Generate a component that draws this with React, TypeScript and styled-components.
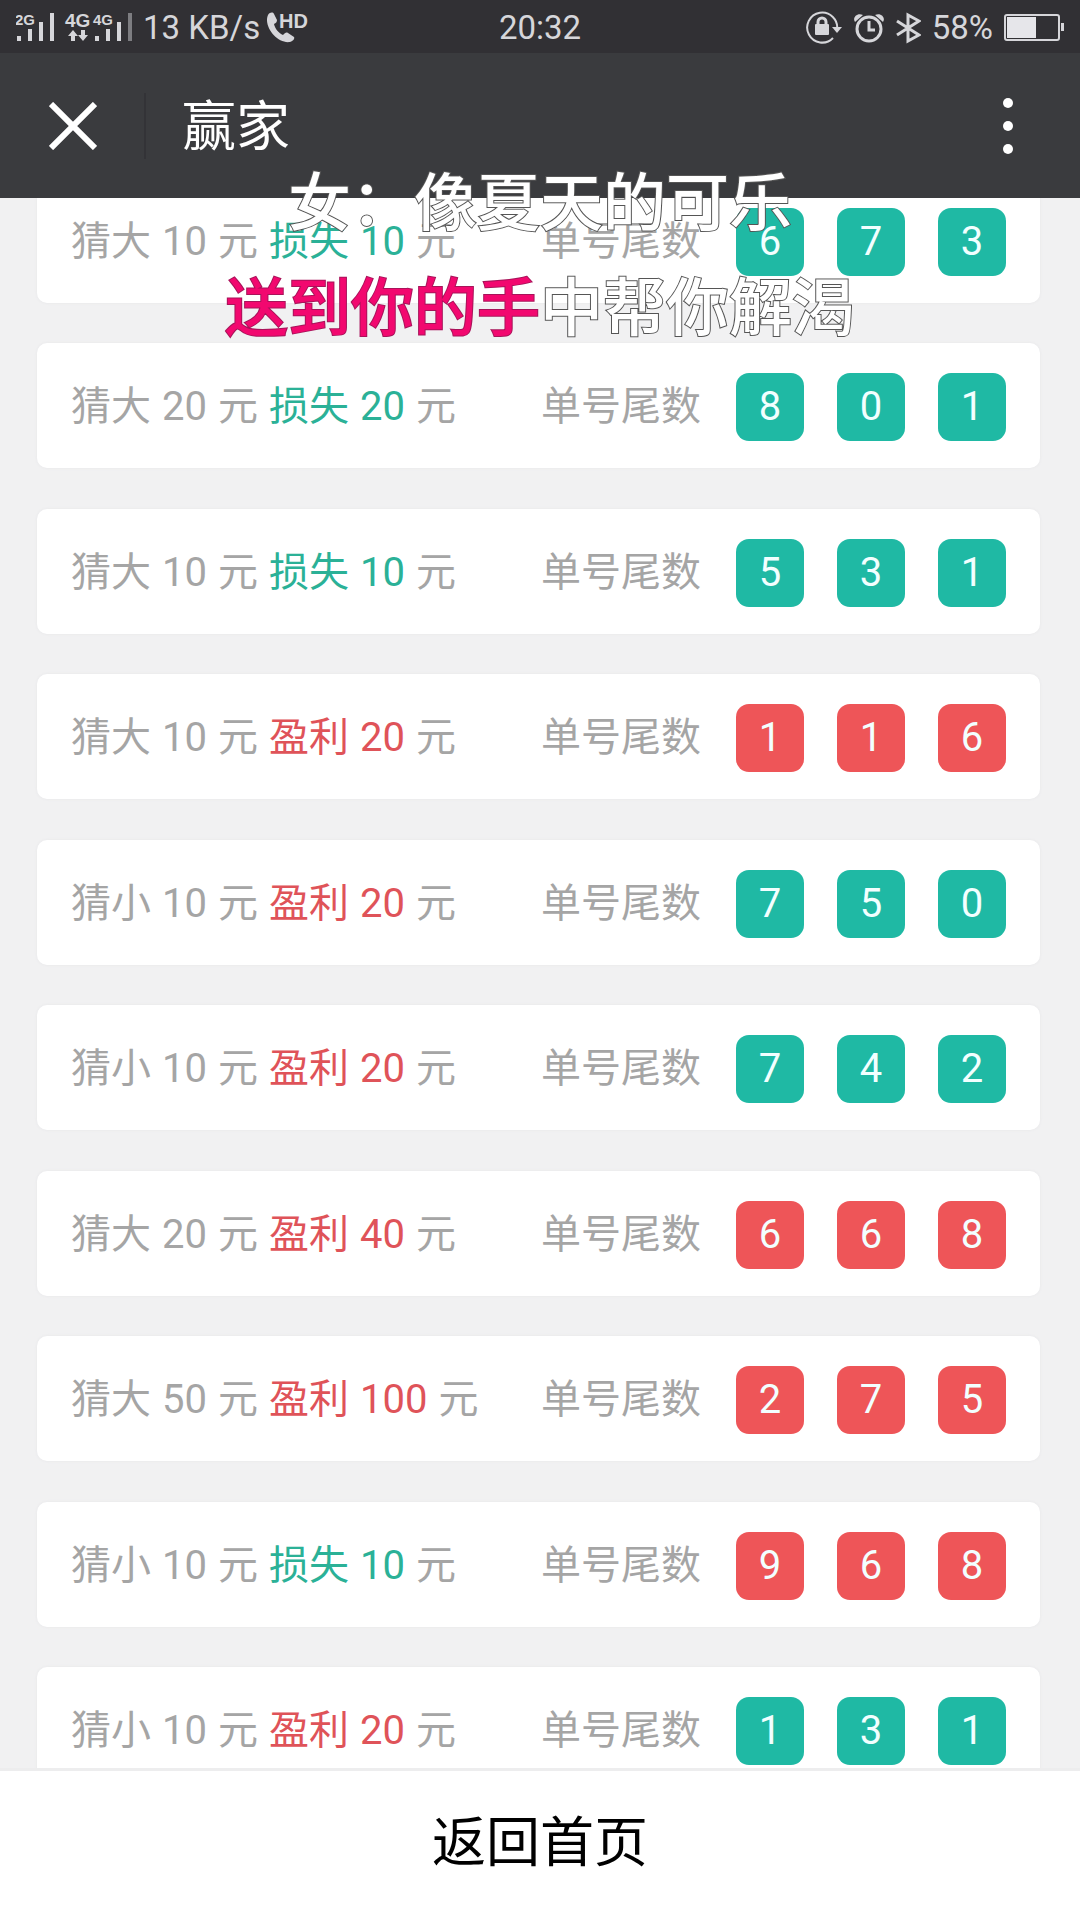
import React from "react";
import styled, { createGlobalStyle } from "styled-components";

const GlobalStyle = createGlobalStyle`
  * { box-sizing: border-box; }
  body {
    margin: 0;
    background: #f1f1f2;
    font-family: Roboto, "Noto Sans CJK SC", sans-serif;
  }
`;

const GREEN = "#1fb9a4";
const RED = "#ee5558";

const Screen = styled.div`
  position: relative;
  display: flex;
  flex-direction: column;
  min-height: 100vh;
  overflow: hidden;
`;

const StatusBar = styled.div`
  display: grid;
  grid-template-columns: 1fr auto 1fr;
  align-items: center;
  height: 53px;
  padding: 2px 16px 0;
  background: #313034;
  color: #d6d6da;
  font-size: 33px;
  line-height: 40px;
`;

const StatusGroup = styled.div<{ $end?: boolean }>`
  display: flex;
  align-items: center;
  justify-content: ${(p) => (p.$end ? "flex-end" : "flex-start")};
  gap: ${(p) => (p.$end ? "11px" : "7px")};
`;

const StatusIcon = styled.svg`
  display: block;
  flex: none;
  fill: currentColor;
  font-family: "Liberation Sans", Arial, sans-serif;
  font-weight: 700;
`;

const TitleBar = styled.header`
  display: flex;
  align-items: center;
  height: 145px;
  padding: 0 66px 0 49px;
  background: #3a3b3e;
  color: #fff;
`;

const IconButton = styled.button`
  display: block;
  padding: 0;
  border: 0;
  background: none;
  color: inherit;
  cursor: pointer;

  svg { display: block; }
`;

const Divider = styled.span`
  width: 2px;
  height: 66px;
  margin: 0 36px 0 47px;
  background: #333337;
`;

const Title = styled.h1`
  flex: 1;
  margin: 0;
  padding-top: 4px;
  font-size: 54px;
  font-weight: 400;
  line-height: 64px;
`;

const Viewport = styled.main`
  display: flex;
  flex: 1;
  flex-direction: column;
  overflow: hidden;
`;

const RecordList = styled.ul`
  display: flex;
  flex: 1;
  flex-direction: column;
  justify-content: space-between;
  margin: -20px 40px -24px 37px;
  padding: 0;
  list-style: none;
`;

const Card = styled.li`
  display: flex;
  align-items: center;
  justify-content: space-between;
  height: 125px;
  padding: 3px 34px 0;
  border-radius: 10px;
  background: #fff;
  box-shadow: 0 0 3px #e6e6e8;
  color: #a5a5a5;
  font-size: 40px;
  line-height: 48px;
  white-space: nowrap;
`;

const Bet = styled.div`
  display: flex;
  gap: 11px;
`;

const Outcome = styled.span<{ $win: boolean }>`
  display: flex;
  gap: 11px;
  color: ${(p) => (p.$win ? "#df5359" : "#2bb197")};
`;

const Tail = styled.div`
  display: flex;
  align-items: center;
  gap: 35px;
`;

const Digits = styled.div`
  display: flex;
  gap: 33px;
`;

const Digit = styled.span<{ $big: boolean }>`
  display: grid;
  place-items: center;
  width: 68px;
  height: 68px;
  border-radius: 13px;
  background: ${(p) => (p.$big ? RED : GREEN)};
  color: #f2ffff;
`;

const HomeButton = styled.button`
  height: 152px;
  padding: 0 0 4px;
  border: 0;
  border-top: 3px solid #ededee;
  background: #fff;
  color: #000;
  font-family: inherit;
  font-size: 54px;
  line-height: 64px;
  cursor: pointer;
`;

const Lyrics = styled.div`
  position: absolute;
  top: 145px;
  left: 0;
  right: 0;
  color: #fff;
  font-family: "Noto Sans CJK SC", sans-serif;
  font-size: 63px;
  font-weight: 500;
  line-height: 105px;
  text-align: center;
  white-space: nowrap;
  pointer-events: none;
  -webkit-text-stroke: 2px #555;
  paint-order: stroke fill;
`;

const LyricLine = styled.p`
  margin: 0;
`;

const Sung = styled.span`
  color: #f2086f;
  -webkit-text-stroke-color: #a8145a;
`;

type Record = { side: string; stake: number; win: boolean; amount: number; tail: string; big: boolean };

const records: Record[] = [
  { side: "大", stake: 10, win: false, amount: 10, tail: "673", big: false },
  { side: "大", stake: 20, win: false, amount: 20, tail: "801", big: false },
  { side: "大", stake: 10, win: false, amount: 10, tail: "531", big: false },
  { side: "大", stake: 10, win: true, amount: 20, tail: "116", big: true },
  { side: "小", stake: 10, win: true, amount: 20, tail: "750", big: false },
  { side: "小", stake: 10, win: true, amount: 20, tail: "742", big: false },
  { side: "大", stake: 20, win: true, amount: 40, tail: "668", big: true },
  { side: "大", stake: 50, win: true, amount: 100, tail: "275", big: true },
  { side: "小", stake: 10, win: false, amount: 10, tail: "968", big: true },
  { side: "小", stake: 10, win: true, amount: 20, tail: "131", big: false },
];

const Signals = () => (
  <StatusIcon width="120" height="32" viewBox="0 0 120 32" aria-hidden="true">
    <text x="-1" y="13" fontSize="15">2G</text>
    <rect x="1" y="24" width="4" height="5" />
    <rect x="12" y="17" width="4" height="12" />
    <rect x="23" y="10" width="4" height="19" />
    <rect x="34" y="1" width="4" height="28" />
    <text x="49" y="15" fontSize="19">4G</text>
    <path d="M57 18l5 6h-3v5h-4v-5h-3zM67 29l-5-6h3v-5h4v5h3z" />
    <text x="77" y="13" fontSize="15">4G</text>
    <rect x="79" y="24" width="4" height="5" />
    <rect x="90" y="17" width="4" height="12" />
    <rect x="101" y="10" width="4" height="19" />
    <rect x="112" y="1" width="4" height="28" fill="#7d7d81" />
  </StatusIcon>
);

const CallHd = () => (
  <StatusIcon width="42" height="32" viewBox="0 0 42 32" aria-hidden="true">
    <path d="M1 3C3 0 6 0 7 2l3 6c0 2-1 3-3 4 1 5 5 9 9 11 2-2 3-3 5-2l6 4c1 2-1 4-4 5C10 32-4 14 1 3z" />
    <text x="12" y="16" fontSize="20">HD</text>
  </StatusIcon>
);

const RotationLock = () => (
  <StatusIcon width="36" height="34" viewBox="0 0 36 34" aria-hidden="true">
    <path d="M31 19A15 15 0 1 0 27 27" fill="none" stroke="currentColor" strokeWidth="2" />
    <path d="M26 16h10l-5 6z" />
    <path d="M12 15v-4a4 4 0 0 1 8 0v4" fill="none" stroke="currentColor" strokeWidth="3" />
    <rect x="9" y="13" width="14" height="11" rx="1" />
  </StatusIcon>
);

const Alarm = () => (
  <StatusIcon width="32" height="32" viewBox="0 0 32 32" aria-hidden="true">
    <circle cx="16" cy="17" r="12" fill="none" stroke="currentColor" strokeWidth="3" />
    <path d="M16 9v9h6" fill="none" stroke="currentColor" strokeWidth="3" />
    <path d="M2 10C-1 6 4 0 10 3zM30 10c3-4-2-10-8-7z" />
  </StatusIcon>
);

const Bluetooth = () => (
  <StatusIcon width="25" height="32" viewBox="0 0 25 32" aria-hidden="true">
    <path d="M1 9l22 14-11 6V3l11 6L1 23" fill="none" stroke="currentColor" strokeWidth="3" />
  </StatusIcon>
);

const Battery = () => (
  <StatusIcon width="60" height="28" viewBox="0 0 60 28" aria-hidden="true">
    <rect x="1" y="1" width="54" height="25" rx="2" fill="none" stroke="currentColor" strokeWidth="2" />
    <rect x="3" y="3" width="29" height="21" fill="#e6e6ea" />
    <rect x="57" y="9" width="3" height="8" />
  </StatusIcon>
);

export default function App() {
  return (
    <Screen>
      <GlobalStyle />
      <StatusBar>
        <StatusGroup>
          <Signals />
          <span>13 KB/s</span>
          <CallHd />
        </StatusGroup>
        <span>20:32</span>
        <StatusGroup $end>
          <RotationLock />
          <Alarm />
          <Bluetooth />
          <span>58%</span>
          <Battery />
        </StatusGroup>
      </StatusBar>
      <TitleBar>
        <IconButton type="button" aria-label="关闭">
          <svg width="48" height="48" viewBox="0 0 48 48" stroke="currentColor" strokeWidth="6">
            <path d="M2 2l44 44M46 2L2 46" />
          </svg>
        </IconButton>
        <Divider />
        <Title>赢家</Title>
        <IconButton type="button" aria-label="更多">
          <svg width="12" height="56" viewBox="0 0 12 56" fill="currentColor">
            <circle cx="6" cy="5" r="5" />
            <circle cx="6" cy="28" r="5" />
            <circle cx="6" cy="51" r="5" />
          </svg>
        </IconButton>
      </TitleBar>
      <Viewport>
        <RecordList>
          {records.map((r, i) => (
            <Card key={i}>
              <Bet>
                <span>猜{r.side}</span>
                <span>{r.stake}</span>
                <span>元</span>
                <Outcome $win={r.win}>
                  <span>{r.win ? "盈利" : "损失"}</span>
                  <span>{r.amount}</span>
                </Outcome>
                <span>元</span>
              </Bet>
              <Tail>
                <span>单号尾数</span>
                <Digits>
                  {r.tail.split("").map((d, j) => (
                    <Digit key={j} $big={r.big}>
                      {d}
                    </Digit>
                  ))}
                </Digits>
              </Tail>
            </Card>
          ))}
        </RecordList>
      </Viewport>
      <HomeButton type="button">返回首页</HomeButton>
      <Lyrics>
        <LyricLine>女：像夏天的可乐</LyricLine>
        <LyricLine>
          <Sung>送到你的手</Sung>中帮你解渴
        </LyricLine>
      </Lyrics>
    </Screen>
  );
}
